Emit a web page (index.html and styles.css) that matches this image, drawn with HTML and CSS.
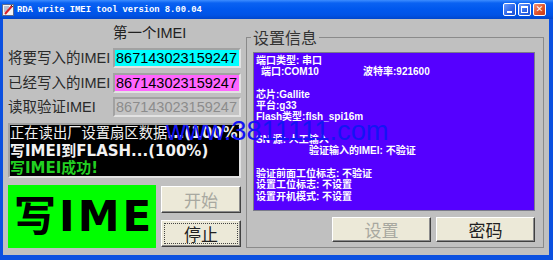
FILE: index.html
```html
<!DOCTYPE html>
<html>
<head>
<meta charset="utf-8">
<link rel="stylesheet" href="styles.css">
</head>
<body>
<div class="window">
  <div class="titlebar">
    <svg class="app-icon" width="12" height="12" viewBox="0 0 12 12">
      <rect x="0.5" y="0.5" width="11" height="11" fill="#f4f4f4" stroke="#5a6a90"/>
      <path d="M2 3h5M2 5h4M2 7h3" stroke="#7a8ab0" stroke-width="1"/>
      <path d="M3 10L10 2" stroke="#d8202a" stroke-width="2"/>
      <path d="M9 1l2 2" stroke="#333" stroke-width="1"/>
    </svg>
    <span class="title">RDA write IMEI tool version 8.00.04</span>
    <div class="ctrls">
      <span class="cb cb-min"><span class="glyph-min"></span></span>
      <span class="cb cb-max"><span class="glyph-max"></span></span>
      <span class="cb cb-close">✕</span>
    </div>
  </div>
  <div class="client">
    <div class="left">
      <div class="heading">第一个IMEI</div>
      <div class="rows">
        <div class="label">将要写入的IMEI</div>
        <div class="field field-cyan">867143023159247</div>
        <div class="label">已经写入的IMEI</div>
        <div class="field field-pink">867143023159247</div>
        <div class="label">读取验证IMEI</div>
        <div class="field field-off">867143023159247</div>
      </div>
      <div class="log">
        <div class="log-line log-white"><span class="thin">正在读出厂设置扇区数据</span>...(100%)</div>
        <div class="log-line log-white">写IMEI到FLASH...(100%)</div>
        <div class="log-line log-green">写IMEI成功!</div>
      </div>
      <div class="bottom">
        <div class="status">写IMEI</div>
        <div class="btncol">
          <button class="btn btn-off">开始</button>
          <button class="btn btn-focus">停止</button>
        </div>
      </div>
    </div>
    <fieldset class="group">
      <legend class="legend">设置信息</legend>
      <div class="info">
        <div class="iline">端口类型: 串口</div>
        <div class="iline"><span class="ind1">端口:COM10</span><span class="baud">波特率:921600</span></div>
        <div class="iline">&nbsp;</div>
        <div class="iline">芯片:Gallite</div>
        <div class="iline">平台:g33</div>
        <div class="iline">Flash类型:flsh_spi16m</div>
        <div class="iline">&nbsp;</div>
        <div class="iline">SN 源: 人工输入</div>
        <div class="iline"><span class="ind2">验证输入的IMEI: 不验证</span></div>
        <div class="iline">&nbsp;</div>
        <div class="iline">验证前面工位标志: 不验证</div>
        <div class="iline">设置工位标志: 不设置</div>
        <div class="iline">设置开机模式: 不设置</div>
      </div>
      <div class="gbtns">
        <button class="btn btn-wide btn-off">设置</button>
        <button class="btn btn-wide">密码</button>
      </div>
    </fieldset>
  </div>
  <div class="watermark">www.3811111.com</div>
</div>
</body>
</html>
```
FILE: styles.css
```css
* { box-sizing: border-box; }
html, body { margin: 0; padding: 0; background: #ffffff; }
.window {
  position: relative;
  width: 553px;
  height: 260px;
  background: #0b50e0;
  display: flex;
  flex-direction: column;
  overflow: hidden;
}
.titlebar {
  height: 19px;
  flex: none;
  display: flex;
  align-items: center;
  padding-left: 2px;
  background: linear-gradient(#3d8dff 0px, #0a62f2 3px, #0058ee 9px, #0053e6 15px, #0046cc 19px);
}
.app-icon { flex: none; margin-right: 3px; }
.title {
  font-family: "Liberation Mono", monospace;
  font-weight: bold;
  font-size: 8.8px;
  color: #ffffff;
  letter-spacing: 0;
  white-space: nowrap;
}
.ctrls {
  margin-left: auto;
  margin-right: 7px;
  display: flex;
  gap: 2px;
}
.cb {
  width: 13px;
  height: 13px;
  border: 1px solid #ffffff;
  border-radius: 2px;
  background: linear-gradient(135deg, #6a9cff, #2a64e8 60%, #1c4fd0);
  display: flex;
  align-items: center;
  justify-content: center;
  position: relative;
}
.glyph-min {
  position: absolute;
  left: 3px;
  bottom: 2px;
  width: 5px;
  height: 2px;
  background: #ffffff;
}
.glyph-max {
  width: 7px;
  height: 7px;
  border: 1px solid #ffffff;
  border-top-width: 2px;
}
.cb-close {
  background: linear-gradient(135deg, #f4947a, #e0522a 55%, #c73a18);
  color: #ffffff;
  font-family: "DejaVu Sans", sans-serif;
  font-size: 9px;
  font-weight: bold;
  line-height: 1;
}
.client {
  flex: 1;
  margin: 0 4px 5px 3px;
  background: #c0c0c0;
  display: flex;
  align-items: flex-start;
  padding: 6px 5px 0 5px;
  gap: 5px;
}
.left {
  width: 233px;
  flex: none;
  display: flex;
  flex-direction: column;
}
.heading {
  padding-left: 105px;
  font-family: "Liberation Sans", "Noto Sans CJK SC", sans-serif;
  font-size: 14.5px;
  line-height: 16px;
  height: 16px;
  color: #222222;
}
.rows {
  margin-top: 7px;
  display: grid;
  grid-template-columns: 105px 128px;
  row-gap: 4.5px;
  align-items: center;
}
.label {
  font-family: "Liberation Sans", "Noto Sans CJK SC", sans-serif;
  font-size: 14.5px;
  line-height: 20px;
  color: #2a2a2a;
  white-space: nowrap;
}
.field {
  height: 20px;
  border: 2px solid;
  border-color: #a2a2a2 #e2e2e2 #e2e2e2 #a2a2a2;
  padding-left: 1px;
  font-family: "Liberation Sans", sans-serif;
  font-size: 14.5px;
  line-height: 16px;
  color: #000000;
  white-space: nowrap;
  overflow: hidden;
}
.field-cyan { background: #00ffff; }
.field-pink { background: #ff66ff; }
.field-off { background: #c4c4c4; color: #8c8c8c; }
.log {
  margin-top: 6px;
  height: 55px;
  background: #000000;
  border: 2px solid;
  border-color: #a2a2a2 #e2e2e2 #e2e2e2 #a2a2a2;
  overflow: hidden;
  font-family: "DejaVu Sans", "Noto Sans CJK SC", sans-serif;
  font-weight: bold;
  font-size: 15px;
  line-height: 17.5px;
  white-space: nowrap;
}
.log-line { white-space: nowrap; }
.log-white { color: #f2f2f2; }
.log-green { color: #22d022; }
.thin { font-weight: normal; font-size: 14.3px; }
.bottom {
  margin-top: 7px;
  display: flex;
  gap: 5px;
}
.status {
  width: 148px;
  height: 63px;
  background: #00ff00;
  padding-left: 6px;
  overflow: hidden;
  white-space: nowrap;
  font-family: "DejaVu Sans", "Noto Sans CJK SC", sans-serif;
  font-weight: bold;
  font-size: 42px;
  line-height: 63px;
  letter-spacing: 3px;
  color: #000000;
}
.btncol {
  width: 80px;
  display: flex;
  flex-direction: column;
  gap: 7px;
  padding-top: 1px;
}
.btn {
  height: 27px;
  width: 80px;
  margin: 0;
  padding: 0;
  background: #ece9d8;
  border: 1px solid;
  border-color: #ffffff #404040 #404040 #ffffff;
  box-shadow: inset -1px -1px 0 #8c8c8c;
  font-family: "Noto Sans CJK SC", sans-serif;
  font-size: 17px;
  line-height: 1;
  color: #202020;
}
.btn-off { color: #a8a8a0; }
.btn-focus {
  outline: 1px dotted #444444;
  outline-offset: -4px;
}
.group {
  margin: 4px 0 0 0;
  width: 298px;
  height: 219px;
  border: 1px solid #8a8a8a;
  padding: 0 8px 5px 6px;
  min-width: 0;
}
.legend {
  padding: 0 2px;
  margin-left: -2px;
  font-family: "Noto Sans CJK SC", sans-serif;
  font-size: 16px;
  line-height: 16px;
  color: #333333;
}
.info {
  margin-top: 7px;
  height: 159px;
  background: #5500ff;
  border: 1px solid #7a7a8a;
  padding: 2px 2px 0 2px;
  font-family: "Liberation Sans", "Noto Sans CJK SC", sans-serif;
  font-weight: bold;
  font-size: 10px;
  line-height: 11.3px;
  color: #ffffff;
  overflow: hidden;
}
.iline { white-space: nowrap; height: 11.3px; }
.ind1 { display: inline-block; padding-left: 5px; width: 107px; }
.ind2 { display: inline-block; padding-left: 53px; }
.gbtns {
  margin-top: 6px;
  display: flex;
  justify-content: flex-end;
  gap: 5px;
  padding-right: 0;
}
.btn-wide { width: 99px; height: 25px; }
.watermark {
  position: absolute;
  left: 166px;
  top: 117px;
  font-family: "Liberation Sans", sans-serif;
  font-size: 28px;
  line-height: 28px;
  color: #1414f4;
  white-space: nowrap;
  transform: scaleX(0.975);
  transform-origin: left top;
  pointer-events: none;
}
```
